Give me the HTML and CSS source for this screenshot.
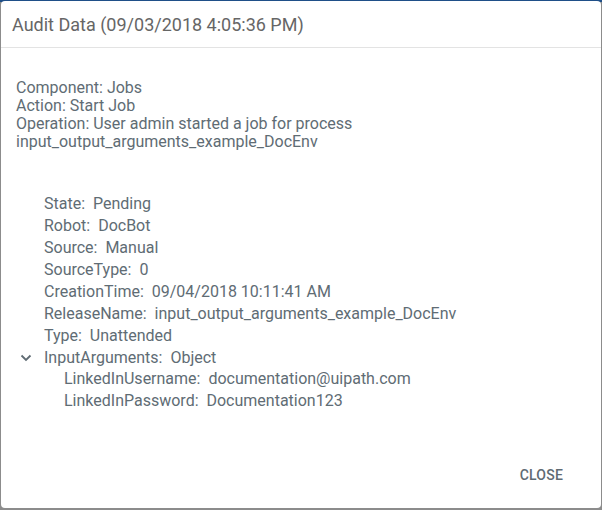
FILE: index.html
```html
<!DOCTYPE html>
<html>
<head>
<meta charset="utf-8">
<link rel="stylesheet" href="styles.css">
</head>
<body>
<div class="backdrop">
  <div class="dialog">
    <div class="header">Audit Data (09/03/2018 4:05:36 PM)</div>
    <div class="content">
      <div class="summary">
        <div>Component: Jobs</div>
        <div>Action: Start Job</div>
        <div>Operation: User admin started a job for process input_output_arguments_example_DocEnv</div>
      </div>
      <div class="tree">
        <div class="row">State:&nbsp; Pending</div>
        <div class="row">Robot:&nbsp; DocBot</div>
        <div class="row">Source:&nbsp; Manual</div>
        <div class="row">SourceType:&nbsp; 0</div>
        <div class="row">CreationTime:&nbsp; 09/04/2018 10:11:41 AM</div>
        <div class="row">ReleaseName:&nbsp; input_output_arguments_example_DocEnv</div>
        <div class="row">Type:&nbsp; Unattended</div>
        <div class="row expandable">
          <svg class="chev" width="12" height="12" viewBox="0 0 12 12"><path d="M1.5 3.5 L6 8 L10.5 3.5" fill="none" stroke="#5f6b73" stroke-width="1.8"/></svg>
          InputArguments:&nbsp; Object
        </div>
        <div class="children">
          <div class="row">LinkedInUsername:&nbsp; documentation@uipath.com</div>
          <div class="row">LinkedInPassword:&nbsp; Documentation123</div>
        </div>
      </div>
    </div>
    <div class="actions">
      <button class="btn">CLOSE</button>
    </div>
  </div>
</div>
</body>
</html>
```
FILE: styles.css
```css
html, body {
  margin: 0;
  padding: 0;
  height: 100%;
}
body {
  background: #8c8c8c;
  font-family: Roboto, "Liberation Sans", sans-serif;
}
.backdrop {
  height: 100%;
  box-sizing: border-box;
  border-top: 2px solid #1f4f88;
  padding: 0 1px 2px 1px;
  display: flex;
}
.dialog {
  flex: 1;
  margin-top: -1px;
  background: #fff;
  border-radius: 4px;
  display: flex;
  flex-direction: column;
}
.header {
  height: 47px;
  box-sizing: border-box;
  padding: 12px 11px 0;
  font-size: 18px;
  line-height: 24px;
  color: #666;
  border-bottom: 1px solid #e3e3e3;
}
.content {
  flex: 1;
  padding: 31px 15px 0;
  color: #606c74;
  font-size: 16px;
}
.summary {
  line-height: 18px;
  width: 360px;
}
.tree {
  margin-top: 42px;
  padding-left: 28px;
}
.row {
  line-height: 22px;
  position: relative;
}
.expandable .chev {
  position: absolute;
  left: -24px;
  top: 5px;
}
.children {
  padding-left: 20px;
  margin-top: -1px;
}
.actions {
  display: flex;
  justify-content: flex-end;
  padding: 0 28px 19px;
}
.btn {
  border: 0;
  background: transparent;
  font-family: Roboto, "Liberation Sans", sans-serif;
  font-size: 14px;
  font-weight: 500;
  color: #5f6b73;
  padding: 6px 10px;
  letter-spacing: 0.2px;
}
```
